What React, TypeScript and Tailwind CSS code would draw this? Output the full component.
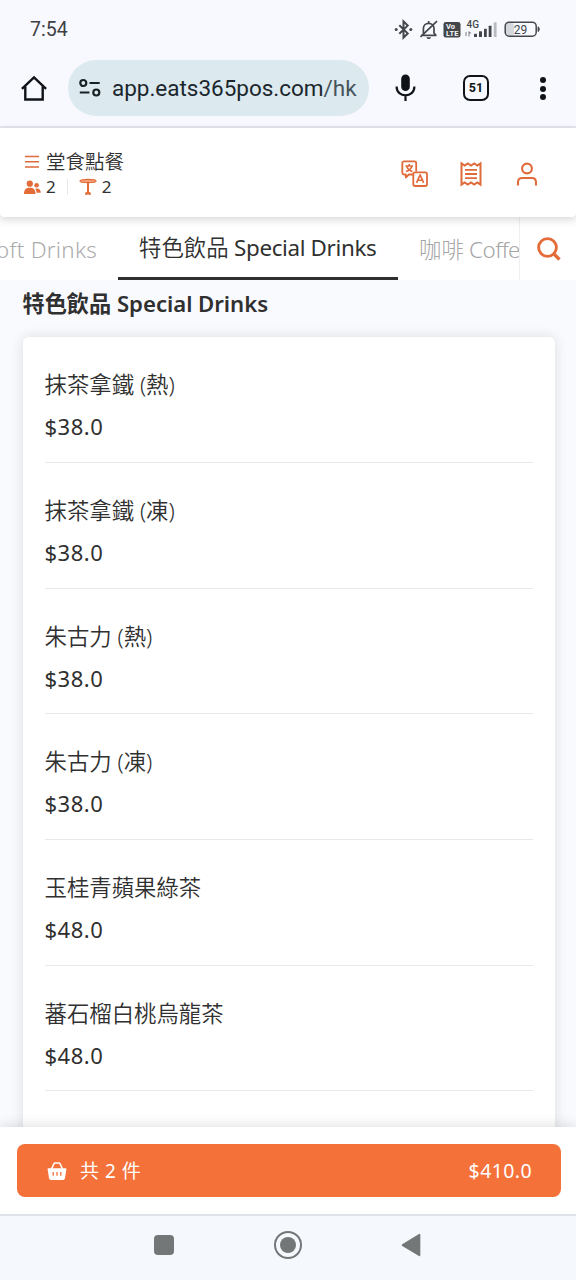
import React from 'react';

const ITEMS = [
  { name: '抹茶拿鐵 (熱)', price: '$38.0' },
  { name: '抹茶拿鐵 (凍)', price: '$38.0' },
  { name: '朱古力 (熱)', price: '$38.0' },
  { name: '朱古力 (凍)', price: '$38.0' },
  { name: '玉桂青蘋果綠茶', price: '$48.0' },
  { name: '蕃石榴白桃烏龍茶', price: '$48.0' },
];

const StatusBar = () => (
  <div className="flex h-[60px] shrink-0 items-center justify-between pl-[30px] pr-9 font-['Roboto',sans-serif] font-normal text-[#3d4043]">
    <span className="text-[19.5px]">7:54</span>
    <svg width="146" height="24" viewBox="0 0 146 24" fill="none" stroke="#44474a" strokeWidth="1.7">
      {/* bluetooth */}
      <path d="M5.3 7.2 13.7 15.4 9.5 19.6V3.4L13.7 7.6 5.3 15.8" strokeWidth="2" />
      <circle cx="2.2" cy="11.5" r="1.5" fill="#44474a" stroke="none" />
      <circle cx="16.8" cy="11.5" r="1.5" fill="#44474a" stroke="none" />
      {/* muted bell */}
      <path d="M27 17.3h15.5M29.4 17V10.5c0-3 2.2-5.2 5.2-5.2s5.4 2.2 5.4 5.2V15l2 2.3M34.7 5.3V3M43 3.2 26.5 18.8" />
      <path d="M32.3 19.2h4.8c-.5 1.3-1.3 1.8-2.4 1.8s-1.9-.5-2.4-1.8Z" fill="#44474a" stroke="none" />
      {/* VoLTE */}
      <rect x="49.5" y="4" width="17" height="15.5" rx="2.3" fill="#44474a" stroke="none" />
      <g fill="#f7f9fe" stroke="none" fontFamily="Roboto, sans-serif" fontWeight="700">
        <text x="52" y="11.2" fontSize="7.5">Vo</text>
        <text x="52" y="18" fontSize="7.5" textLength="12.5">LTE</text>
      </g>
      {/* signal */}
      <text x="72.5" y="9.7" fontSize="10" fontWeight="500" fill="#44474a" stroke="none" fontFamily="Roboto, sans-serif">4G</text>
      <g fill="#44474a" stroke="none">
        <path d="M71.5 14h1v4h-1zM74.5 13l3 2.2-2 .4v3h-1z" opacity=".7" />
        <rect x="80" y="15.8" width="3" height="3.2" rx=".5" />
        <rect x="85" y="13.3" width="3" height="5.7" rx=".5" />
        <rect x="90" y="10.8" width="2.8" height="8.2" rx=".5" />
        <rect x="94.7" y="7.8" width="2.8" height="11.2" rx=".5" />
        <rect x="99.8" y="4.3" width="2.8" height="14.7" rx=".5" opacity=".35" />
      </g>
      {/* battery */}
      <rect x="112" y="5" width="8" height="12.5" rx="3" fill="#d5d8dc" stroke="none" />
      <rect x="111.2" y="4.2" width="31" height="14" rx="4" strokeWidth="1.5" />
      <path d="M144 8.8c1.8.4 1.8 4.4 0 4.8z" fill="#44474a" strokeWidth=".8" />
      <text x="119.8" y="16" fontSize="12" fill="#44474a" stroke="none" fontFamily="Roboto, sans-serif">29</text>
    </svg>
  </div>
);

const BrowserBar = () => (
  <div className="flex h-[68px] shrink-0 items-start border-b-2 border-[#e3e6ec] font-['Roboto',sans-serif] font-normal">
    <svg className="ml-[21px] mt-[15px]" width="26" height="27" viewBox="0 0 26 27" fill="none" stroke="#111417" strokeWidth="2.4">
      <path d="M4.3 11.5v13h17.4v-13" />
      <path d="M.9 13.8 13 2.3l12.1 11.5" />
    </svg>
    <div className="ml-[21px] flex h-14 w-[301px] items-center overflow-hidden rounded-full bg-[#dce9ef]">
      <svg className="ml-[11px] shrink-0" width="22" height="20" viewBox="0 0 22 20" fill="none" stroke="#172126" strokeWidth="2.2">
        <circle cx="4.3" cy="5" r="3" />
        <path d="M10.5 5h10.2M.8 14.5h9.6" />
        <circle cx="17.3" cy="14.5" r="3" />
      </svg>
      <span className="ml-[11px] mt-0.5 whitespace-nowrap text-[22.5px] tracking-[-0.02px] text-[#1b262c]">
        app.eats365pos.com<span className="text-[#46545b]">/hk</span>
      </span>
    </div>
    <svg className="ml-[26px] mt-3.5" width="21" height="28" viewBox="0 0 21 28" fill="none" stroke="#111417" strokeWidth="2.2">
      <rect x="6.2" y=".5" width="8.6" height="16.5" rx="4.3" fill="#111417" stroke="none" />
      <path d="M1.6 12.5c0 11.8 17.8 11.8 17.8 0M10.5 21.5v5.5" />
    </svg>
    <div className="ml-[47px] mt-[15px] flex h-[26px] w-[26px] items-center justify-center rounded-[7px] border-[2.5px] border-[#111417] text-[12.5px] font-bold text-[#111417]">
      51
    </div>
    <div className="ml-[51px] mt-[17px] flex flex-col gap-[2.5px]">
      <i className="h-1.5 w-1.5 rounded-full bg-[#111417]" />
      <i className="h-1.5 w-1.5 rounded-full bg-[#111417]" />
      <i className="h-1.5 w-1.5 rounded-full bg-[#111417]" />
    </div>
  </div>
);

const Header = () => (
  <header className="relative z-10 flex h-[89px] shrink-0 items-start justify-between rounded-b bg-white pl-6 pr-[38px] shadow-[0_3px_9px_rgba(0,0,0,0.15)]">
    <div className="mt-5">
      <div className="flex h-7 items-center">
        <svg width="16" height="14" viewBox="0 0 16 14" stroke="#df6b3b" strokeWidth="1.5">
          <path d="M1 1.5h14M1 6.7h14M1 12h14" />
        </svg>
        <span className="ml-1.5 text-[19.5px] leading-7">堂食點餐</span>
      </div>
      <div className="flex h-[22px] items-center text-[17px] font-normal">
        <svg width="17" height="15" viewBox="0 0 17 15" fill="#e46c39">
          <circle cx="5.8" cy="3.7" r="3.1" />
          <path d="M0 14c0-4.3 2-6.2 5.8-6.2s5.7 1.9 5.7 6.2z" />
          <circle cx="12.6" cy="5.2" r="2.3" />
          <path d="M11.2 8.7c3.7-.7 5.4.9 5.6 4h-4.2c-.1-1.7-.5-2.9-1.4-4Z" />
        </svg>
        <span className="-mt-px ml-[5px]">2</span>
        <i className="ml-[11px] h-4 w-px bg-[#e6e6e6]" />
        <svg className="ml-[11px]" width="18" height="18" viewBox="0 0 18 18" fill="none" stroke="#e46c39" strokeWidth="1.3">
          <ellipse cx="9" cy="3" rx="8" ry="1.6" fill="#f6a078" />
          <path d="M9 5v9.5" strokeWidth="2" />
          <path d="M6.7 16c0-2.3 4.6-2.3 4.6 0z" />
        </svg>
        <span className="-mt-px ml-[5px]">2</span>
      </div>
    </div>
    <div className="mt-8 flex items-center">
      {/* language */}
      <svg width="28" height="28" viewBox="0 0 28 28" fill="none" stroke="#df6b3b" strokeWidth="1.8" strokeLinejoin="round">
        <path d="M12 14.5H8l-3.2 3v-3H3A1.7 1.7 0 0 1 1.3 13V3A1.7 1.7 0 0 1 3 1.3h10.5A1.7 1.7 0 0 1 15.2 3v8.5" />
        <rect x="12.3" y="12.3" width="13.7" height="13.7" rx="1.7" />
        <path d="M4.5 6h7.5M8.2 4v2M5.8 6.5c.8 2.3 2.7 4.3 5.7 5M10.8 6.5c-.8 2.3-2.8 4.3-5.8 5" strokeWidth="1.6" />
        <path d="m15.5 22.8 3.6-8 3.6 8M16.7 20.2h4.8" strokeWidth="1.6" />
      </svg>
      {/* receipt */}
      <svg className="ml-[31px]" width="22" height="26" viewBox="0 0 22 26" fill="none" stroke="#df6b3b" strokeWidth="2">
        <path d="M1.5 2.4v21.2l3.2-2.2 3.1 2.2 3.2-2.2 3.2 2.2 3.1-2.2 3.2 2.2V2.4l-3.2 2.2-3.1-2.2L11 4.600 7.800 2.400 4.700 4.600z" />
        <path d="M5 8.9h12M5 13h12M5 17.1h12" strokeWidth="1.8" />
      </svg>
      {/* account */}
      <svg className="ml-[34px]" width="22" height="25" viewBox="0 0 22 25" fill="none" stroke="#df6b3b" strokeWidth="2.1">
        <circle cx="11" cy="6.5" r="4.9" />
        <path d="M2 23.5v-3.2c0-2.8 1.5-4.3 4.3-4.3h9.4c2.8 0 4.3 1.5 4.3 4.3v3.2" />
      </svg>
    </div>
  </header>
);

const CategoryTabs = () => (
  <nav className="flex h-[63px] shrink-0 bg-white text-[22.4px] leading-8">
    <div className="flex w-[520px] overflow-hidden whitespace-nowrap border-r border-[#efefef]">
      <div className="flex w-[118px] shrink-0 justify-end pr-[21px] pt-[17px] text-[#acacac]">
        <span className="font-[350] tracking-[0.25px]">Soft Drinks</span>
      </div>
      <div className="w-[280px] shrink-0 border-b-[3px] border-[#2d2f31] pl-[21px] pt-[15px]">
        特色飲品<span className="font-normal tracking-[-0.35px]"> Special Drinks</span>
      </div>
      <div className="shrink-0 pl-[21px] pt-[17px] font-light text-[#a6a6a6]">
        咖啡<span className="font-[350] tracking-[-0.5px]"> Coffee</span>
      </div>
    </div>
    <div className="flex flex-1 justify-center pl-0.5">
      <svg className="mt-5" width="24" height="24" viewBox="0 0 24 24" fill="none" stroke="#e46c39" strokeWidth="2.9">
        <circle cx="10.5" cy="10.5" r="8.9" />
        <path d="m17 17 5.5 5.5" strokeWidth="3.3" />
      </svg>
    </div>
  </nav>
);

export default function App() {
  return (
    <div className="flex h-[1280px] w-[576px] flex-col overflow-hidden bg-[#f7f9fe] font-['Noto_Sans','Noto_Sans_CJK_TC',sans-serif] font-[350] text-[#303030]">
      <StatusBar />
      <BrowserBar />
      <Header />
      <CategoryTabs />

      <main className="flex min-h-0 flex-1 flex-col overflow-hidden bg-[#f9fafe] pl-[22.5px] pr-[21.5px]">
        <h1 className="h-[57.2px] shrink-0 whitespace-nowrap pt-2 text-[22.2px] font-bold leading-8">
          特色飲品<span className="font-semibold tracking-[-0.05px]"> Special Drinks</span>
        </h1>
        <section className="h-[900px] shrink-0 rounded-md bg-white px-[22px] shadow-[0_0_13px_rgba(0,0,0,0.12)]">
          {ITEMS.map((item) => (
            <div key={item.name} className="h-[125.7px] border-b border-[#e9e9e9] pt-8">
              <div className="text-[22.4px] leading-8">{item.name}</div>
              <div className="mt-[9px] text-[22px] font-normal leading-8 tracking-[0.5px]">{item.price}</div>
            </div>
          ))}
        </section>
      </main>

      <footer className="relative z-10 h-[87px] shrink-0 bg-white px-[17px] pt-[17px] shadow-[0_-2px_12px_rgba(0,0,0,0.12)]">
        <button className="flex h-[53px] w-[544px] items-center rounded-lg bg-[#f4713a] pl-[30px] pr-[29px] text-white">
          <svg width="20" height="20" viewBox="0 0 20 20" fill="none">
            <path d="M4.5 8 7 2.6Q7.3 2 8 2h4q.7 0 1 .6L15.5 8" stroke="#fff" strokeWidth="1.5" />
            <path d="M1.4 7.2h17.2q1 0 .8 1L18 17q-.2 1.9-2 1.9H4Q2.2 18.9 2 17L.6 8.2q-.2-1 .8-1Z" fill="#fff" />
            <path d="M6.2 11v3.7M10 11v3.7M13.8 11v3.7" stroke="#f4713a" strokeWidth="1.3" />
          </svg>
          <span className="ml-[13px] mt-0.5 text-[19px] font-normal tracking-[0.5px]">共 2 件</span>
          <span className="ml-auto text-[19.5px] font-normal tracking-[0.4px]">$410.0</span>
        </button>
      </footer>

      <div className="relative z-10 flex h-[66px] shrink-0 items-center justify-center border-t-2 border-[#dfe3e8] bg-[#f5f8fd] pb-1.5 pr-px">
        <i className="h-5 w-5 rounded-[4px] bg-[#737777]" />
        <div className="ml-[100px] flex h-7 w-7 items-center justify-center rounded-full border-2 border-[#737777]">
          <i className="h-4 w-4 rounded-full bg-[#737777]" />
        </div>
        <svg className="ml-[99px]" width="20" height="24" viewBox="0 0 20 24" fill="#737777">
          <path d="M18 .9q1.3-.7 1.3.8v20.6q0 1.5-1.3.8L1.2 13q-1.2-.9 0-1.8z" />
        </svg>
      </div>
    </div>
  );
}
